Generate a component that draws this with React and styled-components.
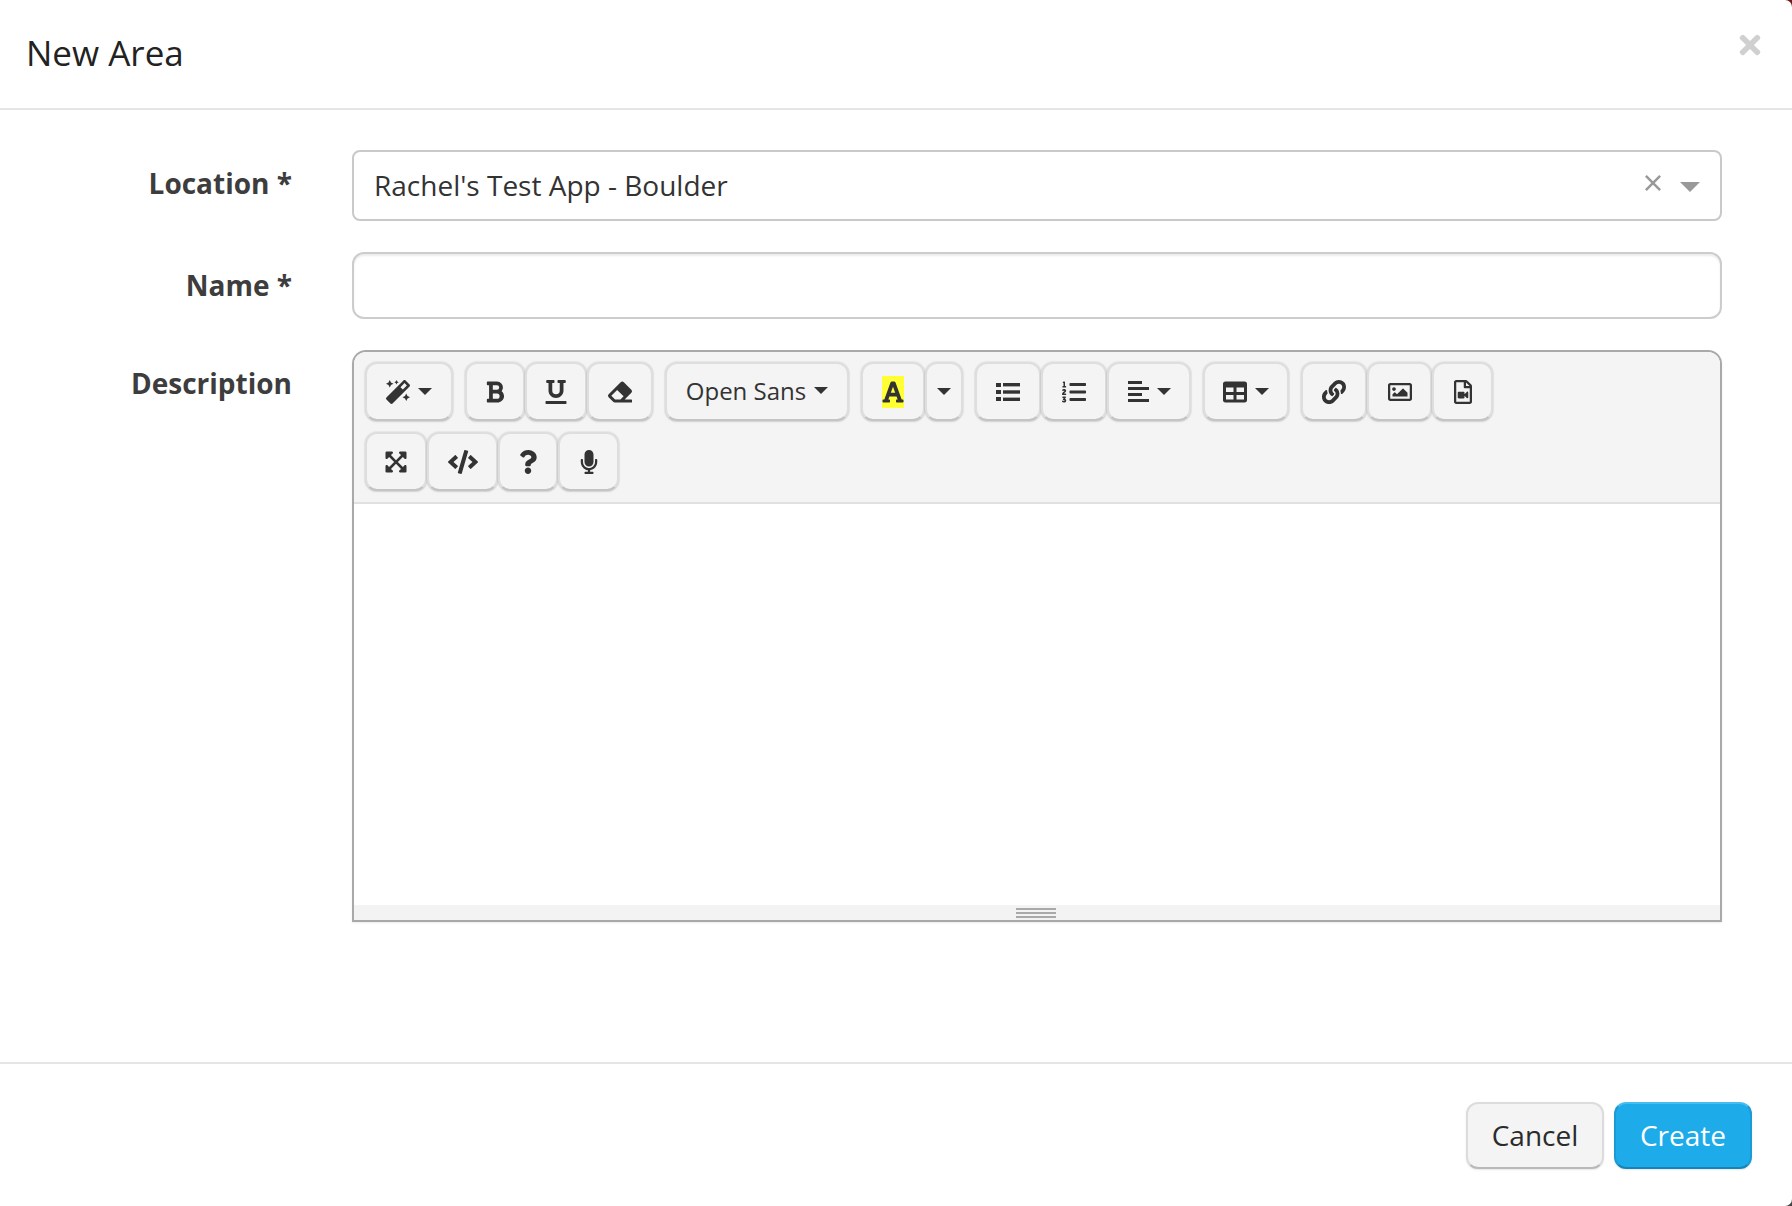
import React from "react";
import styled, { createGlobalStyle } from "styled-components";
import {
  FaMagic, FaBold, FaUnderline, FaEraser, FaFont, FaListOl,
  FaTable, FaLink, FaRegImage, FaRegFileVideo, FaExpandArrowsAlt, FaCode, FaQuestion,
  FaMicrophone, FaTimes,
} from "react-icons/fa";

const GlobalStyle = createGlobalStyle`
  html, body {
    margin: 0;
    padding: 0;
    background: linear-gradient(#701818, #444);
  }
  body {
    font-family: "Open Sans", "Liberation Sans", sans-serif;
    color: #333;
  }
`;

const Modal = styled.div`
  width: 1792px;
  height: 1206px;
  display: flex;
  flex-direction: column;
  background: #fff;
  border-radius: 0 7px 7px 0;
`;

const Header = styled.header`
  height: 108px;
  flex: none;
  display: flex;
  justify-content: space-between;
  padding: 0 31px 0 26px;
  border-bottom: 2px solid #e5e5e5;
`;

const Title = styled.h4`
  margin: 30px 0 0;
  font-size: 35px;
  line-height: 46px;
  font-weight: 400;
  color: #222;
`;

const Close = styled.button`
  width: 22px;
  height: 22px;
  margin-top: 34px;
  padding: 0;
  border: 0;
  background: none;
  color: #d0d0d0;
  display: flex;
  align-items: center;
  justify-content: center;
  font-size: 30px;
`;

const Form = styled.form`
  flex: 1;
  display: grid;
  grid-template-columns: 292px 1370px;
  column-gap: 60px;
  row-gap: 31px;
  align-content: start;
  padding-top: 40px;
`;

const Label = styled.label`
  text-align: right;
  font-size: 28px;
  line-height: 38px;
  font-weight: 700;
  color: #3d3d3d;
  padding-top: ${(p) => p.$top}px;
`;

const Select = styled.div`
  height: 71px;
  box-sizing: border-box;
  display: flex;
  align-items: center;
  border: 2px solid #c9c9c9;
  border-radius: 8px;
  padding: 0 20px 2px;
  font-size: 28px;
  color: #333;
`;

const SelectValue = styled.span`
  flex: 1;
`;

const ClearIcon = styled.svg`
  width: 16px;
  height: 16px;
  margin-right: 19px;
  margin-top: -4px;
`;

const SelectCaret = styled.span`
  width: 0;
  height: 0;
  margin-top: 5px;
  border-left: 10px solid transparent;
  border-right: 10px solid transparent;
  border-top: 10px solid #999;
`;

const NameInput = styled.input`
  height: 67px;
  box-sizing: border-box;
  width: 100%;
  border: 2px solid #ccc;
  border-radius: 12px;
  box-shadow: inset 0 2px 2px rgba(0, 0, 0, 0.075);
  outline: none;
  background: #fff;
`;

const Editor = styled.div`
  height: 572px;
  box-sizing: border-box;
  display: flex;
  flex-direction: column;
  border: 2px solid #a9a9a9;
  border-radius: 14px 14px 0 0;
  box-shadow: 0 1px 2px rgba(0, 0, 0, 0.08);
  overflow: hidden;
`;

const Toolbar = styled.div`
  flex: none;
  height: 152px;
  box-sizing: border-box;
  background: #f4f4f4;
  border-bottom: 2px solid #e0e0e0;
  padding: 10px 0 0 11px;
  display: flex;
  flex-direction: column;
  gap: 11px;
`;

const ToolRow = styled.div`
  display: flex;
  gap: 12px;
`;

const ToolGroup = styled.div`
  display: flex;
`;

const ToolButton = styled.button`
  width: ${(p) => p.$w}px;
  height: 59px;
  box-sizing: border-box;
  padding: 0 0 ${(p) => p.$pad || 0}px;
  display: flex;
  align-items: center;
  justify-content: center;
  gap: 8px;
  font-family: inherit;
  font-size: 24px;
  color: #333;
  background: #f4f4f4;
  border: 2px solid #dedede;
  border-bottom-color: #c4c4c4;
  border-radius: 12px;
  box-shadow: 0 0 1px 1px rgba(0, 0, 0, 0.05), 0 1px 2px rgba(0, 0, 0, 0.1);
  svg {
    font-size: ${(p) => p.$icon || 24}px;
  }
`;

const Caret = styled.span`
  width: 0;
  height: 0;
  border-left: 7px solid transparent;
  border-right: 7px solid transparent;
  border-top: 7px solid #333;
`;

const Highlight = styled.span`
  width: 22px;
  height: 32px;
  display: flex;
  align-items: center;
  justify-content: center;
  background: #ffff33;
  color: #333;
`;

const EditArea = styled.div`
  flex: 1;
  background: #fff;
`;

const StatusBar = styled.div`
  flex: none;
  height: 15px;
  background: #f3f3f3;
  display: flex;
  justify-content: center;
`;

const Grip = styled.div`
  width: 40px;
  height: 10px;
  margin-top: 3px;
  margin-right: 2px;
  background: repeating-linear-gradient(to bottom, #a9a9a9 0 2px, transparent 2px 4px);
`;

const Footer = styled.footer`
  flex: none;
  height: 144px;
  box-sizing: border-box;
  border-top: 2px solid #e5e5e5;
  display: flex;
  justify-content: flex-end;
  gap: 10px;
  padding: 38px 40px 0 0;
`;

const ActionButton = styled.button`
  width: ${(p) => p.$w}px;
  height: 67px;
  box-sizing: border-box;
  padding: 0 0 1px;
  font-family: inherit;
  font-size: 28px;
  border-radius: 12px;
  border: 2px solid ${(p) => (p.$primary ? "#1b9ad4" : "#dcdcdc")};
  border-top-color: ${(p) => (p.$primary ? "#45bdf0" : "#dcdcdc")};
  border-bottom-color: ${(p) => (p.$primary ? "#1784b8" : "#b9b9b9")};
  background: ${(p) => (p.$primary ? "#1eabea" : "#f4f4f4")};
  color: ${(p) => (p.$primary ? "#fff" : "#2b2b2b")};
  box-shadow: 0 1px 2px rgba(0, 0, 0, 0.1);
`;

// summernote's list icon has square bullets, the font awesome one has round ones
const BulletList = () => (
  <svg width="24" height="20" viewBox="0 0 24 20" fill="#333">
    <rect x="0" y="1" width="5" height="4" />
    <rect x="7" y="1" width="17" height="3.4" />
    <rect x="0" y="8" width="5" height="4" />
    <rect x="7" y="8.3" width="17" height="3.4" />
    <rect x="0" y="15" width="5" height="4" />
    <rect x="7" y="15.6" width="17" height="3.4" />
  </svg>
);

const AlignLeft = () => (
  <svg width="21" height="21" viewBox="0 0 21 21" fill="#333">
    <rect x="0" y="0" width="14" height="3" />
    <rect x="0" y="6" width="21" height="3" />
    <rect x="0" y="12" width="14" height="3" />
    <rect x="0" y="18" width="21" height="3" />
  </svg>
);

export default function App() {
  return (
    <Modal>
      <GlobalStyle />
      <Header>
        <Title>New Area</Title>
        <Close type="button"><FaTimes /></Close>
      </Header>
      <Form>
        <Label $top={14}>Location *</Label>
        <Select>
          <SelectValue>Rachel's Test App - Boulder</SelectValue>
          <ClearIcon viewBox="0 0 18 18">
            <path d="M1 1L17 17M17 1L1 17" stroke="#999" strokeWidth="2.8" fill="none" />
          </ClearIcon>
          <SelectCaret />
        </Select>
        <Label $top={14}>Name *</Label>
        <NameInput />
        <Label $top={14}>Description</Label>
        <Editor>
          <Toolbar>
            <ToolRow>
              <ToolGroup>
                <ToolButton $w={88}><FaMagic /><Caret /></ToolButton>
              </ToolGroup>
              <ToolGroup>
                <ToolButton $w={60}><FaBold /></ToolButton>
                <ToolButton $w={62}><FaUnderline /></ToolButton>
                <ToolButton $w={66}><FaEraser /></ToolButton>
              </ToolGroup>
              <ToolGroup>
                <ToolButton $w={184} $pad={2}>Open Sans<Caret /></ToolButton>
              </ToolGroup>
              <ToolGroup>
                <ToolButton $w={64}><Highlight><FaFont /></Highlight></ToolButton>
                <ToolButton $w={38}><Caret /></ToolButton>
              </ToolGroup>
              <ToolGroup>
                <ToolButton $w={66}><BulletList /></ToolButton>
                <ToolButton $w={66}><FaListOl /></ToolButton>
                <ToolButton $w={84}><AlignLeft /><Caret /></ToolButton>
              </ToolGroup>
              <ToolGroup>
                <ToolButton $w={86}><FaTable /><Caret /></ToolButton>
              </ToolGroup>
              <ToolGroup>
                <ToolButton $w={66}><FaLink /></ToolButton>
                <ToolButton $w={65}><FaRegImage /></ToolButton>
                <ToolButton $w={61}><FaRegFileVideo /></ToolButton>
              </ToolGroup>
            </ToolRow>
            <ToolRow>
              <ToolGroup>
                <ToolButton $w={62}><FaExpandArrowsAlt /></ToolButton>
                <ToolButton $w={71} $icon={30}><FaCode /></ToolButton>
                <ToolButton $w={60}><FaQuestion /></ToolButton>
                <ToolButton $w={61}><FaMicrophone /></ToolButton>
              </ToolGroup>
            </ToolRow>
          </Toolbar>
          <EditArea />
          <StatusBar><Grip /></StatusBar>
        </Editor>
      </Form>
      <Footer>
        <ActionButton type="button" $w={138}>Cancel</ActionButton>
        <ActionButton type="button" $w={138} $primary>Create</ActionButton>
      </Footer>
    </Modal>
  );
}
